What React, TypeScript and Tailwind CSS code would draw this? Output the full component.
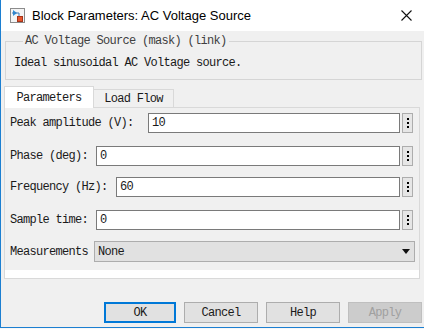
const mono = "font-['Liberation_Mono','Noto_Sans_CJK_SC',monospace] text-[12px] leading-[16px] tracking-[-0.7px] text-[#1a1a1a]";

function Dots() {
  return (
    <div className="w-[11px] h-[20px] ml-[2px] bg-[#e6e6e6] border border-[#adadad] flex flex-col items-center justify-center gap-[2px]">
      <span className="w-[2px] h-[2px] bg-black" />
      <span className="w-[2px] h-[2px] bg-black" />
      <span className="w-[2px] h-[2px] bg-black" />
    </div>
  );
}

function FieldRow({ label, value, inputLeft, className }: { label: string; value: string; inputLeft: string; className?: string }) {
  return (
    <div className={`flex items-center h-[20px] ${className ?? ''}`}>
      <span className={`${mono} pl-[5px] ${inputLeft} shrink-0 whitespace-nowrap`}>{label}</span>
      <div className={`${mono} flex-1 h-[20px] bg-white border border-[#7a7a7a] flex items-center pl-[3px]`}>{value}</div>
      <Dots />
    </div>
  );
}

function BlockIcon() {
  return (
    <svg width="16" height="16" viewBox="0 0 16 16">
      <rect x="0.5" y="0.5" width="14" height="14" fill="#f4f4f4" stroke="#8c8c8c" />
      <path d="M3 2 L7 5 L3 8 Z" fill="#2f8fd8" />
      <path d="M2 5 H9 V9" fill="none" stroke="#3a7bb8" strokeWidth="1" />
      <rect x="7.5" y="8.5" width="5" height="5" fill="#e8552b" stroke="#a4341a" />
    </svg>
  );
}

export default function App() {
  return (
    <div className="w-[424px] h-[329px] bg-[#f7f7f7]">
      <div className="w-[424px] h-[328px] bg-[#f0f0f0] border-l border-b border-[#1c7fd1] flex flex-col">
        <div className="h-[31px] bg-white flex items-center shrink-0">
          <div className="ml-[9px] mt-[1px]">
            <BlockIcon />
          </div>
          <span className="ml-[6px] font-['Liberation_Sans',Arial,sans-serif] text-[13px] text-black">
            Block Parameters: AC Voltage Source
          </span>
          <svg className="ml-auto mr-[12px]" width="11" height="11" viewBox="0 0 11 11">
            <path d="M0.5 0.5 L10.5 10.5 M10.5 0.5 L0.5 10.5" stroke="#111" strokeWidth="1.1" />
          </svg>
        </div>

        <fieldset className="ml-[4px] mr-[2px] mt-[2px] border border-[#d5d5d5] pb-[8px] pl-[9px]">
          <legend className={`${mono} ml-[8px] px-[2px] text-[#404040]`}>AC Voltage Source (mask) (link)</legend>
          <div className={`${mono} mt-[6px] -ml-[1px]`}>Ideal sinusoidal AC Voltage source.</div>
        </fieldset>

        <div className="mt-[6px] ml-[3px] mr-[4px] flex flex-col">
          <div className="flex items-end h-[21px]">
            <div className={`${mono} w-[90px] h-[22px] bg-white border border-b-0 border-[#d9d9d9] flex items-center justify-center relative top-[1px]`}>
              Parameters
            </div>
            <div className={`${mono} w-[80px] h-[18px] bg-[#f0f0f0] border border-l-0 border-b-0 border-[#d9d9d9] flex items-center justify-center`}>
              Load Flow
            </div>
          </div>
          <div className="h-[172px] bg-white border border-[#d9d9d9] flex flex-col">
            <div className="flex-1 bg-[#f0f0f0] mb-[8px] pr-[6px] flex flex-col pt-[5px]">
              <FieldRow label="Peak amplitude (V):" value="10" inputLeft="w-[143px]" />
              <FieldRow label="Phase (deg):" value="0" inputLeft="w-[91px]" className="mt-[13px]" />
              <FieldRow label="Frequency (Hz):" value="60" inputLeft="w-[111px]" className="mt-[11px]" />
              <FieldRow label="Sample time:" value="0" inputLeft="w-[91px]" className="mt-[13px]" />
              <div className="flex items-center h-[21px] mt-[11px]">
                <span className={`${mono} pl-[5px] w-[89px] shrink-0 whitespace-nowrap`}>Measurements</span>
                <div className={`${mono} flex-1 h-[21px] -mr-[2px] bg-[#e1e1e1] border border-[#adadad] flex items-center pl-[3px]`}>
                  None
                  <svg className="ml-auto mr-[4px]" width="8" height="5" viewBox="0 0 8 5">
                    <path d="M0 0 H8 L4 5 Z" fill="#111" />
                  </svg>
                </div>
              </div>
            </div>
          </div>
        </div>

        <div className="mt-[23px] mr-[2px] flex justify-end gap-[8px]">
          <button className={`${mono} w-[72px] h-[21px] bg-[#e1e1e1] border-2 border-[#0078d7]`}>OK</button>
          <button className={`${mono} w-[74px] h-[21px] bg-[#e1e1e1] border border-[#adadad]`}>Cancel</button>
          <button className={`${mono} w-[74px] h-[21px] bg-[#e1e1e1] border border-[#adadad]`}>Help</button>
          <button className={`${mono} w-[74px] h-[21px] bg-[#cccccc] border border-[#bfbfbf] !text-[#a0a0a0]`}>Apply</button>
        </div>
      </div>
    </div>
  );
}
